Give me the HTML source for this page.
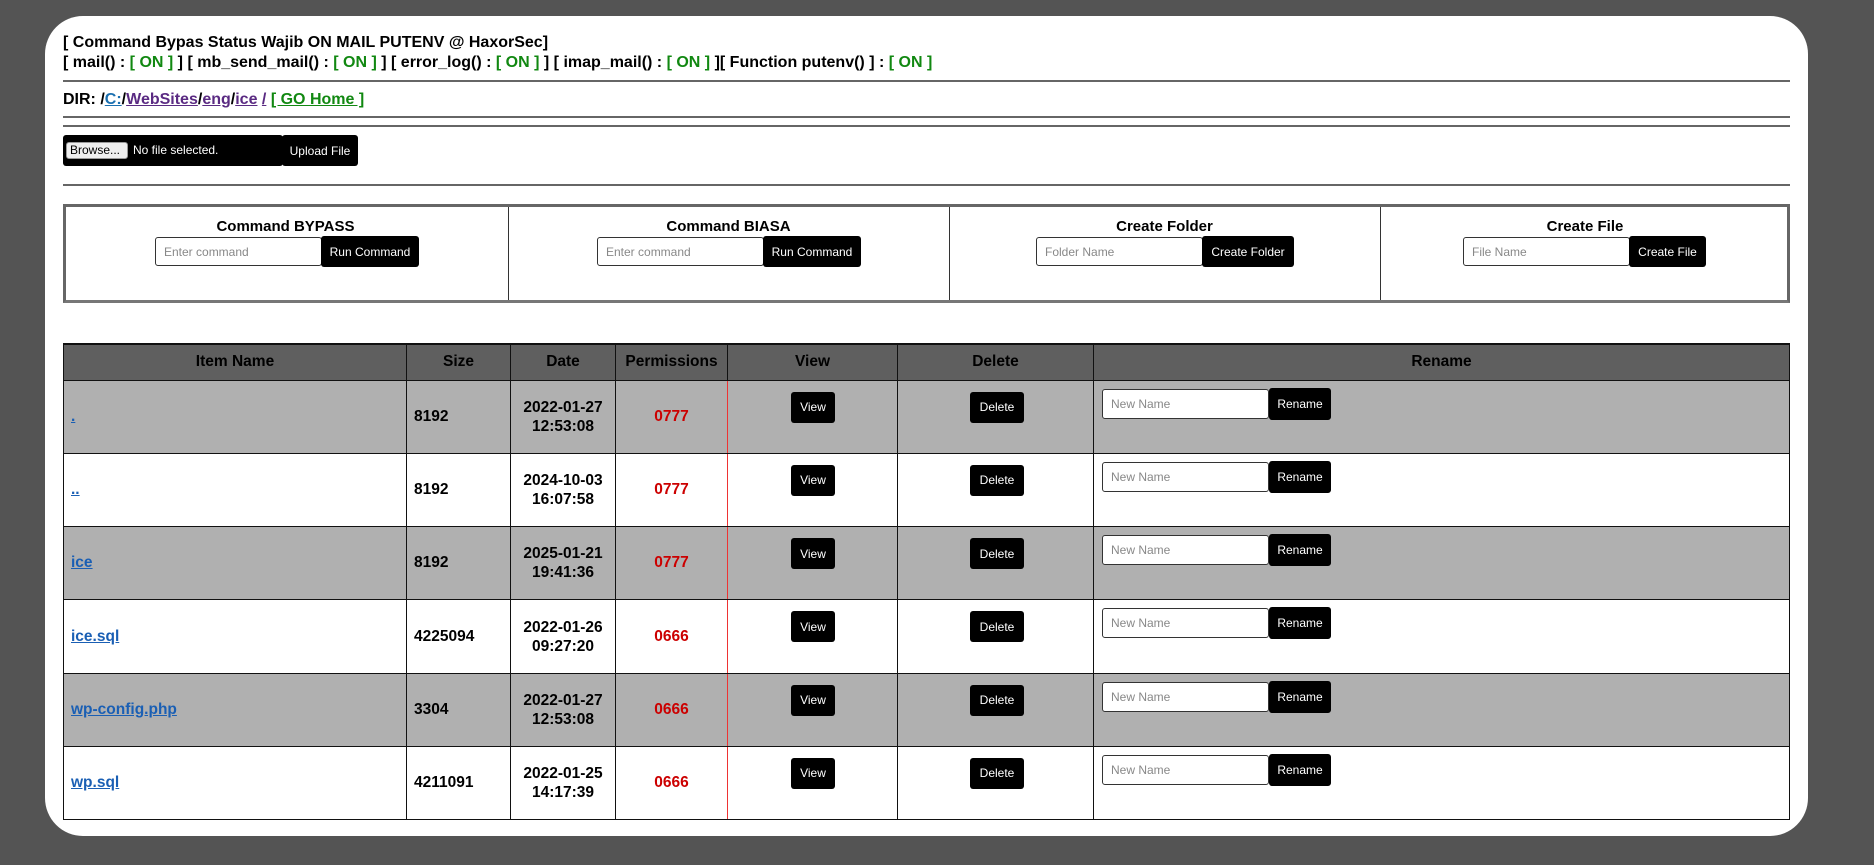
<!DOCTYPE html>
<html><head><meta charset="utf-8"><style>
*{box-sizing:border-box}
body{margin:0;width:1874px;height:865px;background:#545454;font-family:"Liberation Sans",Arial,sans-serif;overflow:hidden;position:relative}
.card{position:absolute;left:45px;top:16px;width:1763px;height:820px;background:#fff;border-radius:38px}
.abs{position:absolute}
.t{font-weight:bold;font-size:16px;color:#000;white-space:nowrap}
.g{color:#118811}
hr.l{position:absolute;left:63px;width:1727px;margin:0;border:0;border-top:2px solid #666}
a{text-decoration:underline}
.btn{background:#000;color:#fff;border-radius:3px;font-size:12px;font-weight:normal;display:flex;align-items:center;justify-content:center;position:absolute}
.inp{position:absolute;background:#fff;border:1px solid #333;border-radius:3px;font-size:12px;font-weight:normal;color:#888;padding-left:8px;display:flex;align-items:center}
.cmd{position:absolute;left:63px;top:204px;width:1727px;height:99px;border:3px solid #666;border-bottom-color:#777}
.cmd .c{position:absolute;top:0;bottom:0;border-left:1px solid #333}
.ct{position:absolute;top:14px;font-weight:bold;font-size:15px;text-align:center}
table{position:absolute;left:63px;top:343px;border-collapse:collapse;table-layout:fixed;width:1727px}
td,th{border:1px solid #111;padding:0;font-size:15.5px;font-weight:bold}
th{background:#5f5f5f;height:36px;border-top:2px solid #111}
td{height:73.3px;position:relative}
tr.o td{background:#b0b0b0}
td.n{padding-left:7px}
td.n a{color:#1a5fb4}
td.s{padding-left:7px}
td.d{text-align:center;line-height:19px}
td.p{text-align:center;color:#c00;border-right:1px solid #e33}
</style></head><body>
<div class="card"></div>
<div class="abs t" style="left:63px;top:34px">[ Command Bypas Status Wajib ON MAIL PUTENV @ HaxorSec]</div>
<div class="abs t" style="left:63px;top:54px">[ mail() : <span class="g">[ ON ]</span> ] [ mb_send_mail() : <span class="g">[ ON ]</span> ] [ error_log() : <span class="g">[ ON ]</span> ] [ imap_mail() : <span class="g">[ ON ]</span> ][ Function putenv() ] : <span class="g">[ ON ]</span></div>
<hr class="l" style="top:80px">
<div class="abs t" style="left:63px;top:91px">DIR: /<a style="color:#1a6fb0">C:</a>/<a style="color:#5a2a82">WebSites</a>/<a style="color:#5a2a82">eng</a>/<a style="color:#5a2a82">ice</a> <a style="color:#5a2a82">/</a> <a class="g">[ GO Home ]</a></div>
<hr class="l" style="top:116px">
<hr class="l" style="top:125px">
<div class="abs" style="left:63px;top:135px;width:220px;height:31px;background:#000;border-radius:3px"></div>
<div class="abs" style="left:66px;top:142px;width:62px;height:17px;background:#eee;border:1px solid #999;border-radius:3px;font-size:12px;line-height:15px;padding-left:3px">Browse...</div>
<div class="abs" style="left:133px;top:143px;color:#fff;font-size:12px">No file selected.</div>
<div class="btn" style="left:282px;top:135px;width:76px;height:31px">Upload File</div>
<hr class="l" style="top:184px">
<div class="cmd">
<div class="c" style="left:442px"></div><div class="c" style="left:883px"></div><div class="c" style="left:1314px"></div>
</div>
<div class="ct" style="left:63px;width:445px;top:218px;position:absolute">Command BYPASS</div>
<div class="inp" style="left:155px;top:237px;width:167px;height:29px">Enter command</div>
<div class="btn" style="left:321px;top:236px;width:98px;height:31px">Run Command</div>
<div class="ct" style="left:508px;width:441px;top:218px;position:absolute">Command BIASA</div>
<div class="inp" style="left:597px;top:237px;width:167px;height:29px">Enter command</div>
<div class="btn" style="left:763px;top:236px;width:98px;height:31px">Run Command</div>
<div class="ct" style="left:949px;width:431px;top:218px;position:absolute">Create Folder</div>
<div class="inp" style="left:1036px;top:237px;width:167px;height:29px">Folder Name</div>
<div class="btn" style="left:1202px;top:236px;width:92px;height:31px">Create Folder</div>
<div class="ct" style="left:1380px;width:410px;top:218px;position:absolute">Create File</div>
<div class="inp" style="left:1463px;top:237px;width:167px;height:29px">File Name</div>
<div class="btn" style="left:1629px;top:236px;width:77px;height:31px">Create File</div>

<table>
<colgroup><col style="width:343px"><col style="width:104px"><col style="width:105px"><col style="width:112px"><col style="width:170px"><col style="width:196px"><col></colgroup>
<tr><th>Item Name</th><th>Size</th><th>Date</th><th>Permissions</th><th>View</th><th>Delete</th><th>Rename</th></tr>
<tr class="o"><td class="n"><a>.</a></td><td class="s">8192</td><td class="d">2022-01-27<br>12:53:08</td><td class="p">0777</td><td><div class="btn" style="left:63px;top:11px;width:44px;height:31px">View</div></td><td><div class="btn" style="left:72px;top:11px;width:54px;height:31px">Delete</div></td><td><div class="inp" style="left:8px;top:8px;width:167px;height:30px">New Name</div><div class="btn" style="left:175px;top:7px;width:62px;height:32px">Rename</div></td></tr>
<tr><td class="n"><a>..</a></td><td class="s">8192</td><td class="d">2024-10-03<br>16:07:58</td><td class="p">0777</td><td><div class="btn" style="left:63px;top:11px;width:44px;height:31px">View</div></td><td><div class="btn" style="left:72px;top:11px;width:54px;height:31px">Delete</div></td><td><div class="inp" style="left:8px;top:8px;width:167px;height:30px">New Name</div><div class="btn" style="left:175px;top:7px;width:62px;height:32px">Rename</div></td></tr>
<tr class="o"><td class="n"><a>ice</a></td><td class="s">8192</td><td class="d">2025-01-21<br>19:41:36</td><td class="p">0777</td><td><div class="btn" style="left:63px;top:11px;width:44px;height:31px">View</div></td><td><div class="btn" style="left:72px;top:11px;width:54px;height:31px">Delete</div></td><td><div class="inp" style="left:8px;top:8px;width:167px;height:30px">New Name</div><div class="btn" style="left:175px;top:7px;width:62px;height:32px">Rename</div></td></tr>
<tr><td class="n"><a>ice.sql</a></td><td class="s">4225094</td><td class="d">2022-01-26<br>09:27:20</td><td class="p">0666</td><td><div class="btn" style="left:63px;top:11px;width:44px;height:31px">View</div></td><td><div class="btn" style="left:72px;top:11px;width:54px;height:31px">Delete</div></td><td><div class="inp" style="left:8px;top:8px;width:167px;height:30px">New Name</div><div class="btn" style="left:175px;top:7px;width:62px;height:32px">Rename</div></td></tr>
<tr class="o"><td class="n"><a>wp-config.php</a></td><td class="s">3304</td><td class="d">2022-01-27<br>12:53:08</td><td class="p">0666</td><td><div class="btn" style="left:63px;top:11px;width:44px;height:31px">View</div></td><td><div class="btn" style="left:72px;top:11px;width:54px;height:31px">Delete</div></td><td><div class="inp" style="left:8px;top:8px;width:167px;height:30px">New Name</div><div class="btn" style="left:175px;top:7px;width:62px;height:32px">Rename</div></td></tr>
<tr><td class="n"><a>wp.sql</a></td><td class="s">4211091</td><td class="d">2022-01-25<br>14:17:39</td><td class="p">0666</td><td><div class="btn" style="left:63px;top:11px;width:44px;height:31px">View</div></td><td><div class="btn" style="left:72px;top:11px;width:54px;height:31px">Delete</div></td><td><div class="inp" style="left:8px;top:8px;width:167px;height:30px">New Name</div><div class="btn" style="left:175px;top:7px;width:62px;height:32px">Rename</div></td></tr>
</table>
</body></html>
